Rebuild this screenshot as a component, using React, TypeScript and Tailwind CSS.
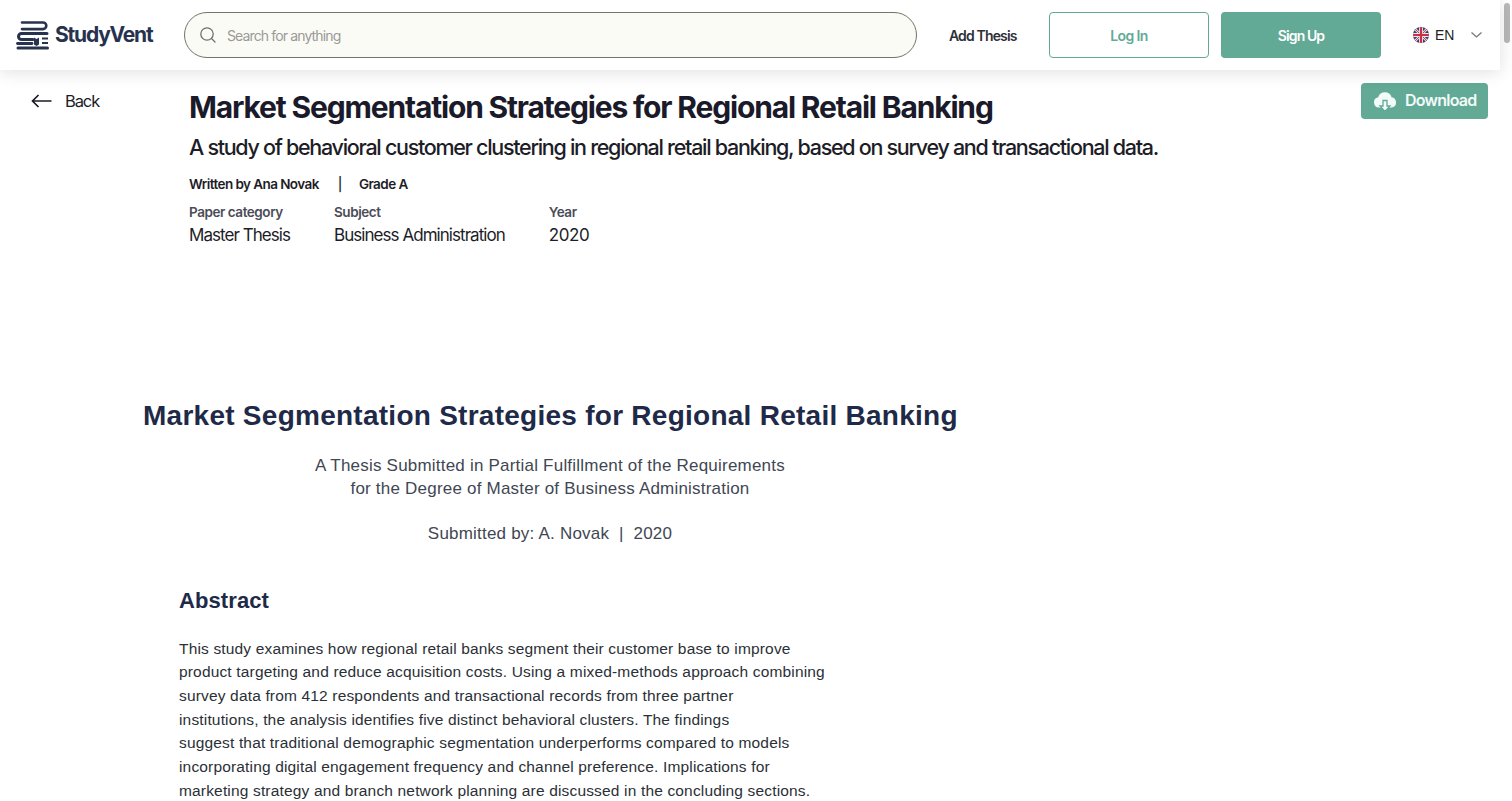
import React from "react";

const sans = "font-['Inter','Liberation_Sans',sans-serif]";

function Logo() {
  return (
    <svg width="33" height="29" viewBox="0 0 33 29" fill="none" className="shrink-0">
      <g stroke="#27324f" strokeLinecap="round">
        <path d="M6 1.500H27a3.300 3.300 0 0 1 0 6.600H6" strokeWidth="2.600" />
        <path d="M31 12.500H5.500a3 3 0 0 0 0 6H17" strokeWidth="3" />
        <path d="M1.500 22.500H16" strokeWidth="2.800" />
        <path d="M2 27H31.500" strokeWidth="3" />
        <path d="M26 17.500H32M26 22H32" strokeWidth="2.200" strokeLinecap="butt" />
      </g>
      <path d="M18 16.500l2.500 1.500 2.500-1.500v7l-2.500 1.500-2.500-1.500z" fill="#27324f" />
    </svg>
  );
}

function Flag() {
  return (
    <svg width="16" height="16" viewBox="0 0 16 16" className="shrink-0">
      <defs>
        <clipPath id="c"><circle cx="8" cy="8" r="8" /></clipPath>
      </defs>
      <g clipPath="url(#c)">
        <rect width="16" height="16" fill="#3d3f78" />
        <path d="M0 0L16 16M16 0L0 16" stroke="#d9d6e2" strokeWidth="2.600" />
        <path d="M0 0L16 16M16 0L0 16" stroke="#c8313f" strokeWidth="0.900" />
        <path d="M8 0V16M0 8H16" stroke="#e9e6ea" strokeWidth="4" />
        <path d="M8 0V16M0 8H16" stroke="#c8313f" strokeWidth="2.200" />
      </g>
    </svg>
  );
}

function CloudUp() {
  return (
    <svg width="24" height="21" viewBox="0 0 24 21" className="shrink-0">
      <path d="M6 16.500a5.200 5.200 0 0 1-.8-10.300A7 7 0 0 1 18.600 6.200 5.200 5.200 0 0 1 18.500 16.500z" fill="#f2fbf8" />
      <path d="M10 9.500h4v5.500h3l-5 5.500-5-5.500h3z" fill="#f2fbf8" stroke="#62a996" strokeWidth="1.300" />
    </svg>
  );
}

function Meta({ label, value, tight }: { label: string; value: string; tight?: boolean }) {
  return (
    <div className="flex flex-col">
      <span className="text-[13.500px] leading-[20px] font-semibold text-[#4b4c57] tracking-[-0.45px]">{label}</span>
      <span className={`mt-[1px] text-[17px] leading-[24px] text-[#1d1d27] ${tight ? "tracking-[-0.95px]" : "tracking-[-0.4px]"}`}>{value}</span>
    </div>
  );
}

const abstractLines = [
  "This study examines how regional retail banks segment their customer base to improve",
  "product targeting and reduce acquisition costs. Using a mixed-methods approach combining",
  "survey data from 412 respondents and transactional records from three partner",
  "institutions, the analysis identifies five distinct behavioral clusters. The findings",
  "suggest that traditional demographic segmentation underperforms compared to models",
  "incorporating digital engagement frequency and channel preference. Implications for",
  "marketing strategy and branch network planning are discussed in the concluding sections.",
];

export default function App() {
  return (
    <div className={`h-[801px] overflow-hidden bg-white flex ${sans}`}>
      <div className="w-[1500px] shrink-0 flex flex-col">
        <header className="relative z-10 h-[70px] bg-white shadow-[0_2px_16px_rgba(0,0,0,0.13)] flex items-center pl-[16px] pr-[12px]">
          <div className="flex items-center gap-[6px] w-[168px] shrink-0">
            <Logo />
            <span className="text-[21px] font-bold tracking-[-1.2px] text-[#27324f]">StudyVent</span>
          </div>
          <div className="w-[733px] h-[46px] rounded-[23px] border border-[#73736b] bg-[#fbfbf6] flex items-center pl-[14px] gap-[10px] shrink-0">
            <svg width="18" height="18" viewBox="0 0 18 18" fill="none" stroke="#6f6f6f" strokeWidth="1.300">
              <circle cx="8" cy="8" r="6.200" />
              <path d="M12.500 12.500L16 16" strokeLinecap="round" />
            </svg>
            <span className="text-[14px] text-[#9a9a96] tracking-[-0.87px]">Search for anything</span>
          </div>
          <span className="ml-[32px] w-[68px] text-[14px] font-semibold text-[#2f2f38] tracking-[-0.85px] whitespace-nowrap">Add Thesis</span>
          <button className="ml-[32px] w-[160px] h-[46px] rounded-[4px] border border-[#62a996] bg-white text-[14px] font-semibold text-[#62a996] tracking-[-0.6px]">Log In</button>
          <button className="ml-[12px] w-[160px] h-[46px] rounded-[4px] bg-[#62a996] text-[14px] font-semibold text-white tracking-[-0.9px]">Sign Up</button>
          <div className="ml-[32px] flex items-center">
            <Flag />
            <span className="ml-[6px] text-[14px] text-[#222] font-['Liberation_Sans',sans-serif]">EN</span>
            <svg className="ml-[17px]" width="11" height="6" viewBox="0 0 11 6" fill="none" stroke="#777" strokeWidth="1.300">
              <path d="M0.500 0.500L5.500 5L10.500 0.500" />
            </svg>
          </div>
        </header>

        <div className="relative flex-1 min-h-0">
          <div className="absolute left-[31px] top-[19px] flex items-center gap-[13px]">
            <svg width="21" height="14" viewBox="0 0 21 14" fill="none" stroke="#1b1b24" strokeWidth="1.700">
              <path d="M20.500 7H1.500M7.500 1L1.500 7L7.500 13" />
            </svg>
            <span className="text-[16.500px] leading-[24px] text-[#1d1d27] tracking-[-1.1px]">Back</span>
          </div>
          <button className="absolute right-[12px] top-[13px] w-[127px] h-[36px] rounded-[4px] bg-[#62a996] flex items-center pl-[12px] gap-[8px]">
            <CloudUp />
            <span className="text-[16px] leading-[22px] -mt-[2px] font-semibold text-[#f2fbf8] tracking-[-0.75px]">Download</span>
          </button>

          <div className="pl-[189px] pt-[19px]">
            <h1 className="text-[30px] leading-[36px] font-bold text-[#1a1a2a] tracking-[-1.17px] whitespace-nowrap">Market Segmentation Strategies for Regional Retail Banking</h1>
            <p className="mt-[7px] text-[21.500px] leading-[30px] font-medium text-[#1d1d27] tracking-[-1.29px] whitespace-nowrap">A study of behavioral customer clustering in regional retail banking, based on survey and transactional data.</p>
            <div className="mt-[12px] flex text-[13.500px] leading-[20px] font-semibold text-[#1d1d27] tracking-[-0.57px]">
              <span>Written by Ana Novak</span>
              <span className="ml-[19px] font-medium">|</span>
              <span className="ml-[17px]">Grade A</span>
            </div>
            <div className="mt-[8px] flex gap-[44px]">
              <Meta label="Paper category" value="Master Thesis" tight />
              <Meta label="Subject" value="Business Administration" tight />
              <Meta label="Year" value="2020" />
            </div>
          </div>

          <div className="mt-[151px] w-[814px] ml-[143px] font-['Liberation_Sans',sans-serif]">
            <h2 className="text-[28px] leading-[36px] font-bold text-[#1e2a47] tracking-[0.26px] whitespace-nowrap">Market Segmentation Strategies for Regional Retail Banking</h2>
            <div className="mt-[20px] text-center text-[17px] leading-[23px] text-[#3f4753] tracking-[0.21px]">
              <p>A Thesis Submitted in Partial Fulfillment of the Requirements</p>
              <p>for the Degree of Master of Business Administration</p>
              <p className="mt-[22px]">Submitted by: A. Novak&nbsp; |&nbsp; 2020</p>
            </div>
            <h3 className="mt-[42px] ml-[36px] text-[22px] leading-[28px] font-bold text-[#1e2a47] tracking-[0.1px]">Abstract</h3>
            <div className="mt-[21.500px] ml-[36px] text-[15.500px] leading-[23.700px] text-[#2b2f36] tracking-[0.163px] whitespace-nowrap">
              {abstractLines.map((l) => (
                <p key={l}>{l}</p>
              ))}
            </div>
          </div>
        </div>
      </div>
      <div className="w-[12px] bg-white relative">
        <div className="absolute left-[4px] top-[3px] w-[6px] h-[40px] rounded-[3px] bg-[#b8b8b8]" />
      </div>
    </div>
  );
}
